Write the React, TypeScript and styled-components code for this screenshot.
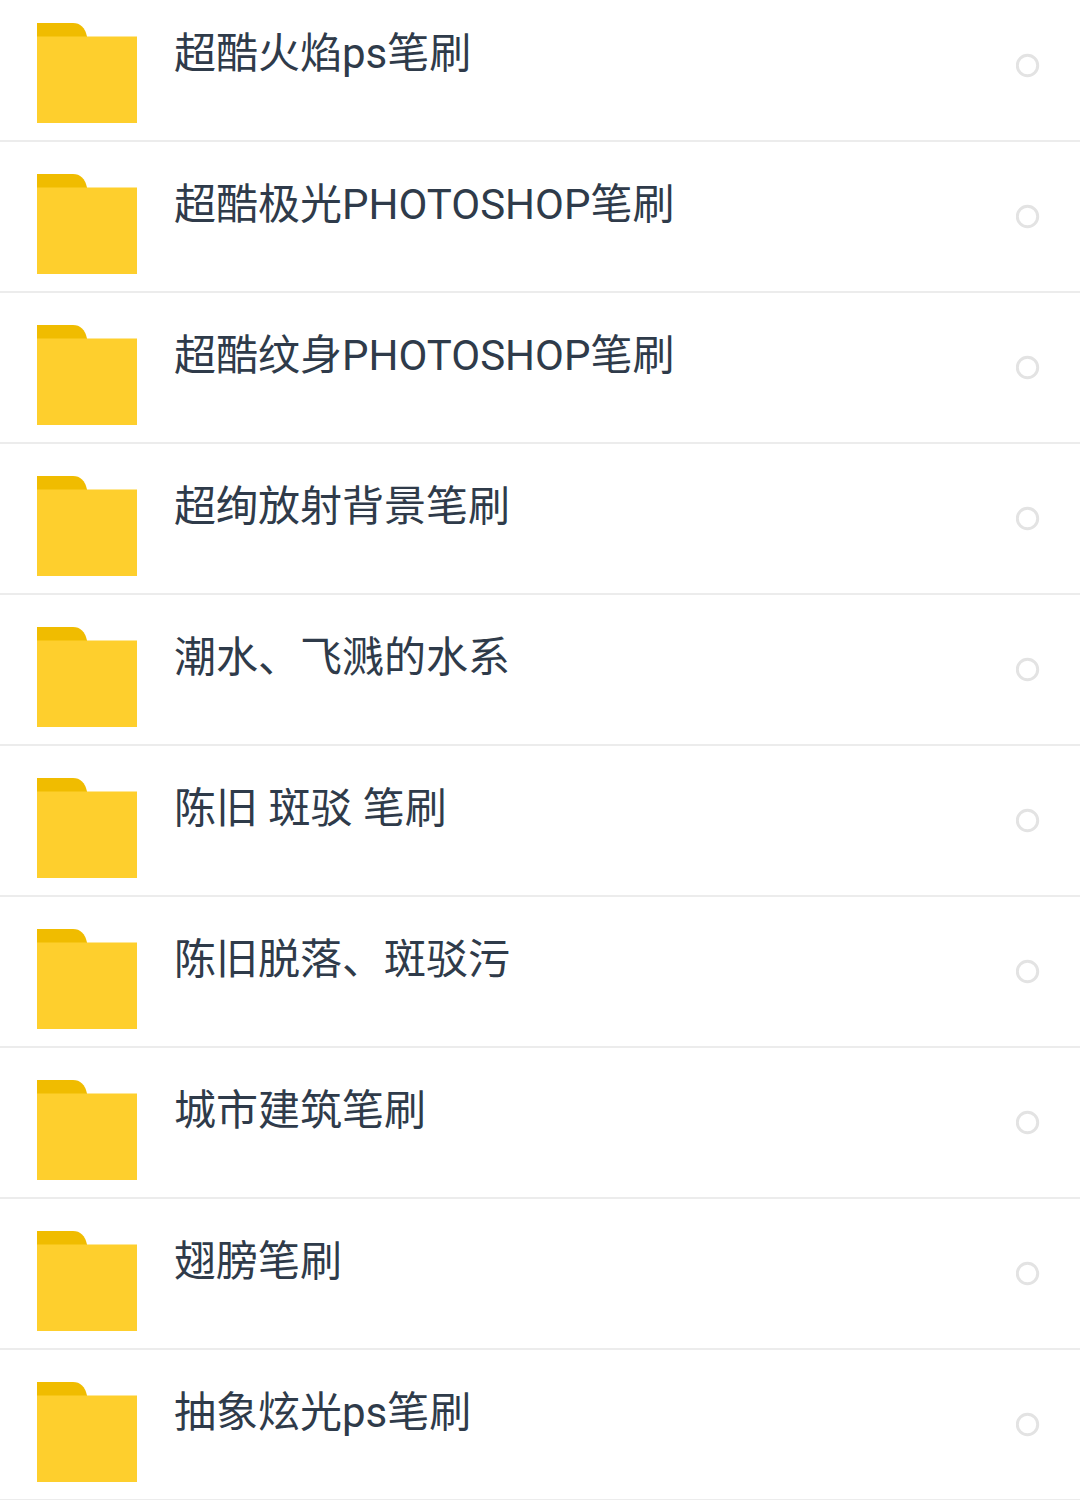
import React from "react";
import styled, { createGlobalStyle } from "styled-components";

const GlobalStyle = createGlobalStyle`
  html, body {
    margin: 0;
    padding: 0;
    height: 1500px;
    overflow: hidden;
    background: #ffffff;
  }
`;

const List = styled.div`
  display: flex;
  flex-flow: column;
  margin-top: -9px;
`;

const Row = styled.div`
  display: flex;
  align-items: flex-start;
  height: 149px;
  padding: 0 40px 0 37px;
  border-bottom: 2px solid #ececec;
`;

const FolderIcon = styled.svg`
  flex: none;
  width: 100px;
  height: 100px;
  margin-top: 32px;
`;

const Name = styled.span`
  flex: 1;
  margin-top: 33px;
  padding-left: 37px;
  font-family: Roboto, "Noto Sans CJK SC", sans-serif;
  font-size: 42px;
  line-height: 60px;
  color: #2f3b4a;
  white-space: pre;
`;

const RadioIcon = styled.svg`
  flex: none;
  width: 24px;
  height: 26px;
  margin-top: 61px;
`;

const names = [
  "超酷火焰ps笔刷",
  "超酷极光PHOTOSHOP笔刷",
  "超酷纹身PHOTOSHOP笔刷",
  "超绚放射背景笔刷",
  "潮水、飞溅的水系",
  "陈旧 斑驳 笔刷",
  "陈旧脱落、斑驳污",
  "城市建筑笔刷",
  "翅膀笔刷",
  "抽象炫光ps笔刷",
];

const Folder = () => (
  <FolderIcon viewBox="0 0 100 100">
    <path d="M0 0H36Q47 0 50 13.5V20H0Z" fill="#f0bc00" />
    <path d="M0 13.5H100V100H0Z" fill="#fecf2d" />
  </FolderIcon>
);

const Radio = () => (
  <RadioIcon viewBox="0 0 24 26">
    <circle cx="11.5" cy="13.5" r="10.2" fill="none" stroke="#e3e3e3" strokeWidth="3" />
  </RadioIcon>
);

const App = () => {
  return (
    <List>
      <GlobalStyle />
      {names.map((name) => (
        <Row key={name}>
          <Folder />
          <Name>{name}</Name>
          <Radio />
        </Row>
      ))}
    </List>
  );
};

export default App;
